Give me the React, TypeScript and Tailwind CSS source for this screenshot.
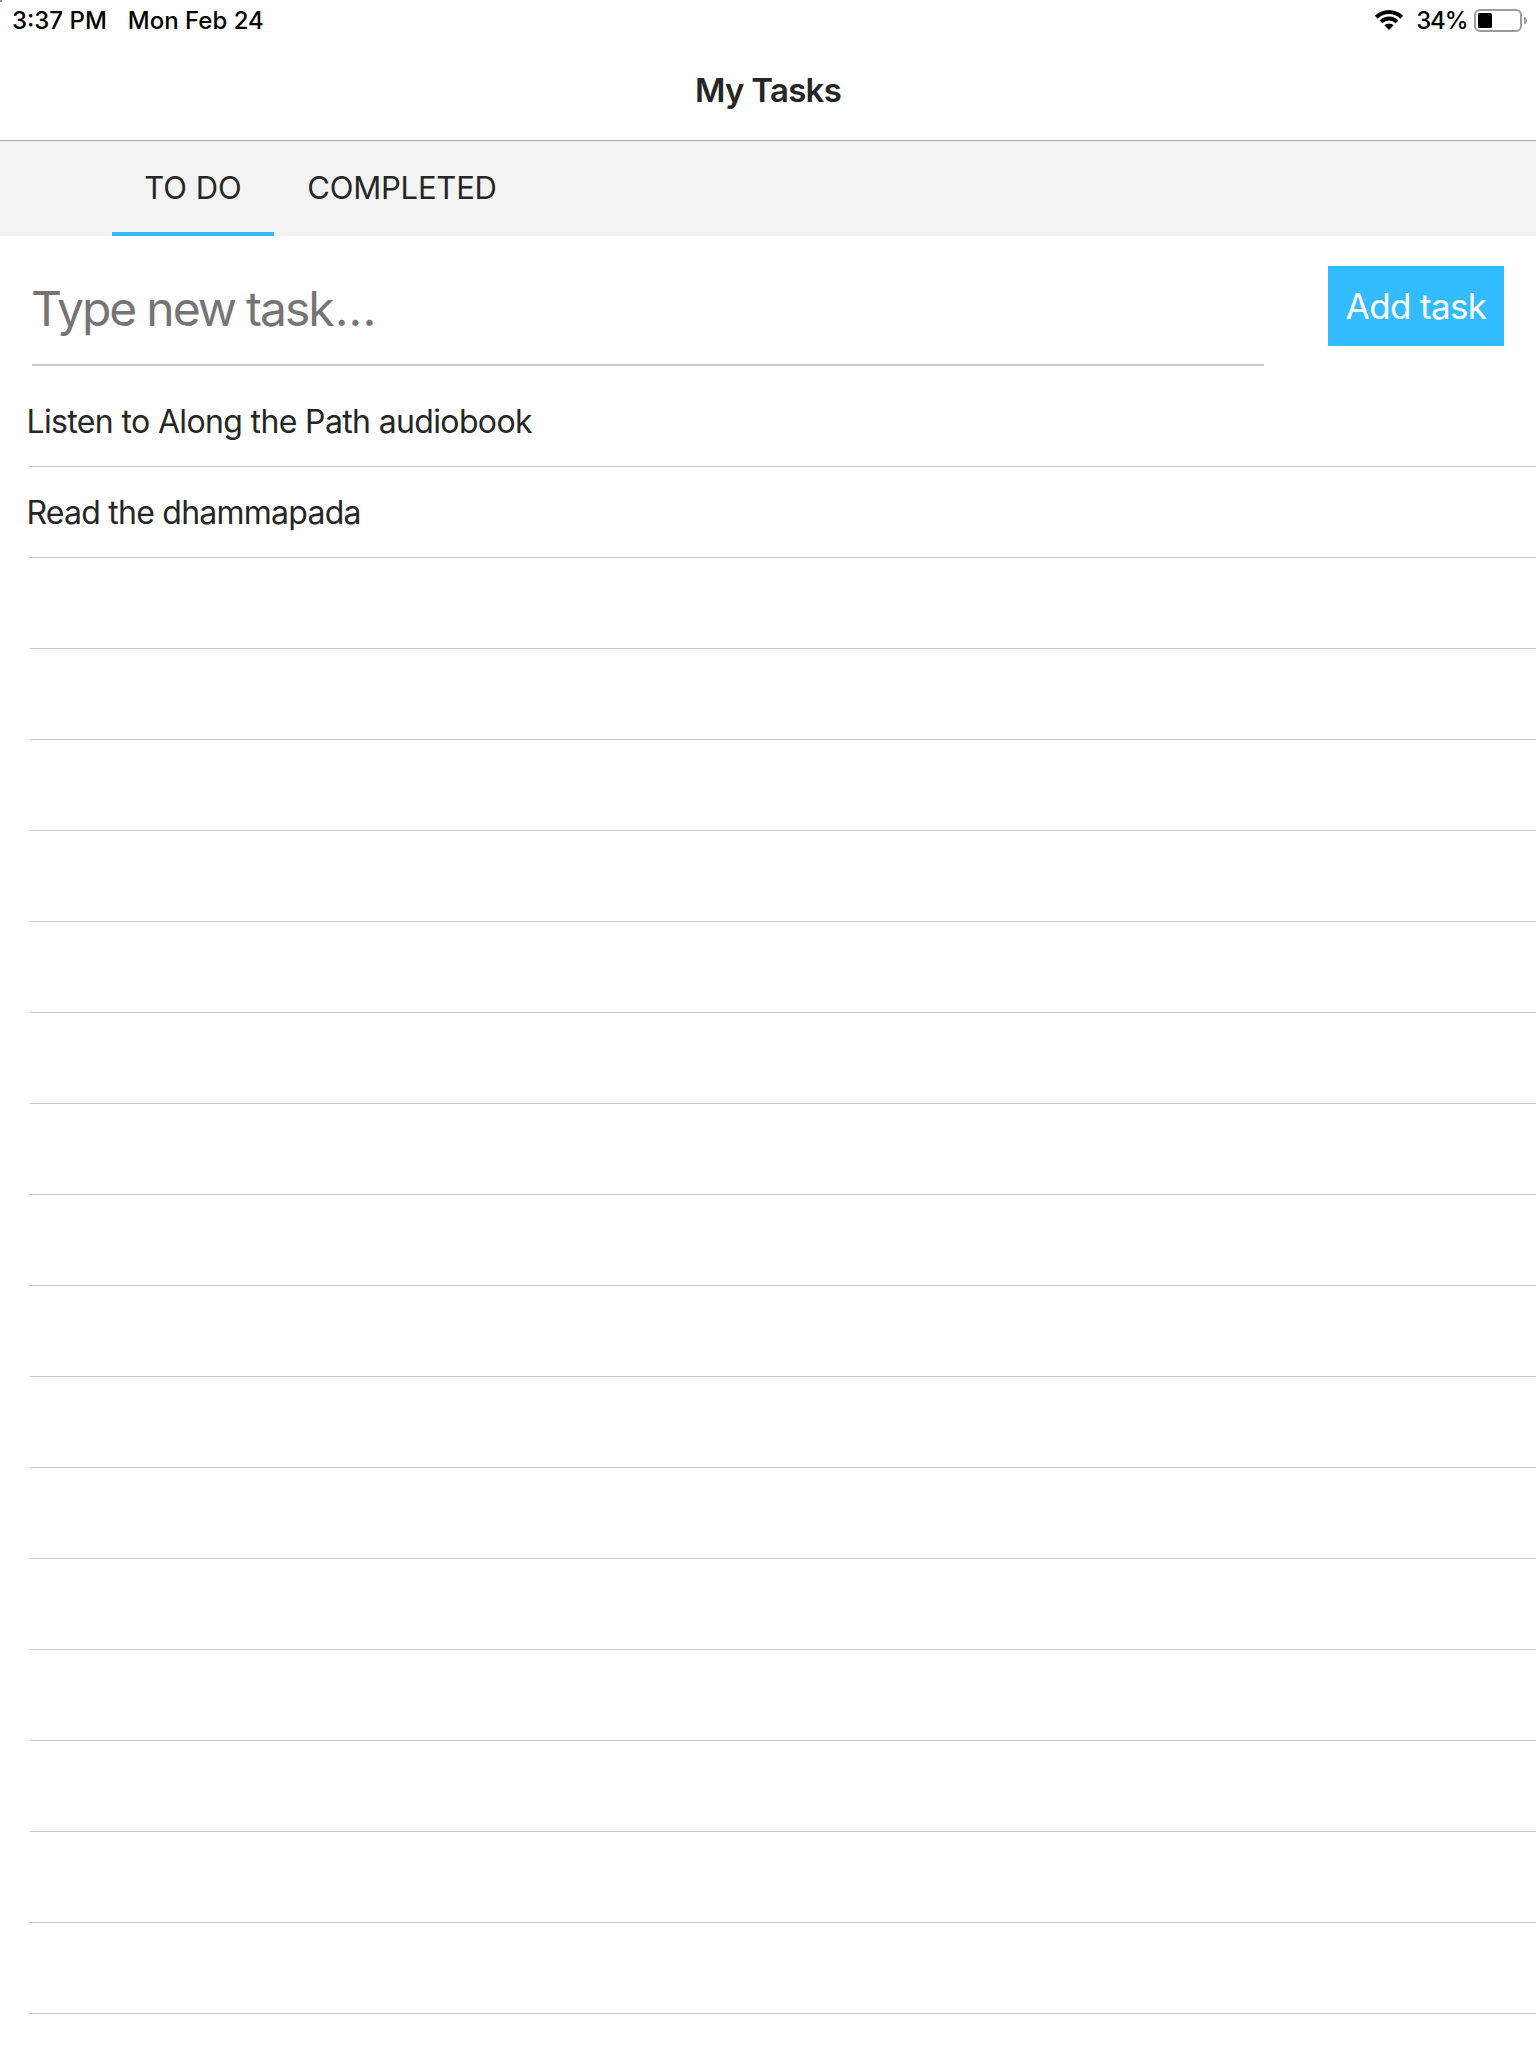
function StatusBar() {
  return (
    <div className="relative flex h-10 items-start justify-between pl-3 pr-[9px] text-[24px] leading-[42px] font-medium text-black">
      <div className="absolute left-0 top-0 size-0.5 bg-[#8e8e8e]" />
      <div className="flex gap-[21px]">
        <span>3:37 PM</span>
        <span>Mon Feb 24</span>
      </div>
      <div className="flex items-start">
        <svg className="mt-[9px] mr-[12px] h-[22px] w-[30px]" viewBox="0 0 30 22" fill="black">
          <path d="M0.860 6.860A20 20 0 0 1 29.140 6.860L26.240 9.760A15.900 15.900 0 0 0 3.760 9.760Z" />
          <path d="M5.520 11.520A13.400 13.400 0 0 1 24.480 11.520L21.650 14.350A9.400 9.400 0 0 0 8.350 14.350Z" />
          <path d="M10.330 16.330A6.600 6.600 0 0 1 19.670 16.330L15 21Z" />
        </svg>
        <span className="mr-[6.5px] tracking-[-1.1px]">34%</span>
        <svg className="mt-[9px] h-[23px] w-[53px]" viewBox="0 0 53 23">
          <rect x="1" y="1" width="46" height="21" rx="5" fill="none" stroke="#9b9b9b" strokeWidth="2" />
          <rect x="4" y="4" width="14" height="15" rx="1.500" fill="black" />
          <path d="M50 7.500C52 8.500 53 10 53 11.500S52 14.500 50 15.500Z" fill="#9b9b9b" />
        </svg>
      </div>
    </div>
  );
}

const tasks = ["Listen to Along the Path audiobook", "Read the dhammapada"];
const rows = Array.from({ length: 18 }, (_, i) => tasks[i] ?? "");

export default function App() {
  return (
    <div className="h-[2048px] w-[1536px] overflow-hidden bg-white font-[Inter,sans-serif] text-[#262626]">
      <StatusBar />
      <header className="flex h-[101px] justify-center border-b border-[#aaaaaa]">
        <h1 className="text-[33px] leading-[101px] font-semibold tracking-[-0.7px]">My Tasks</h1>
      </header>
      <nav className="flex h-[95px] bg-[#f3f3f3] pl-28 text-[31px]">
        <button className="w-[162px] border-b-4 border-[#33bbff] pt-[3px] leading-[88px]">TO DO</button>
        <button className="w-[256px] border-b-4 border-transparent pt-[3px] leading-[88px] tracking-[-0.2px]">COMPLETED</button>
      </nav>
      <section className="flex h-[140px] items-start justify-between px-8">
        <div className="h-[130px] w-[1232px] border-b-2 border-[#c8c8c8] text-[48px] leading-[146px] text-[#757575]">
          <span className="-ml-px tracking-[-2px] [word-spacing:-0.5px]">Type new task</span>
          <span className="ml-[2px] tracking-[0.1px]">...</span>
        </div>
        <button className="mt-[30px] h-20 w-44 bg-[#33bbff] text-[35px] leading-[80px] tracking-[-0.65px] text-white">
          Add task
        </button>
      </section>
      <ul className="text-[32px] tracking-[-0.64px]">
        {rows.map((task, i) => (
          <li key={i} className="ml-[30px] h-[91px] border-b border-[#c8c8c8] leading-[91px] nth-2:tracking-[-0.76px]">
            <span className="-ml-[3.5px]">{task}</span>
          </li>
        ))}
      </ul>
    </div>
  );
}
